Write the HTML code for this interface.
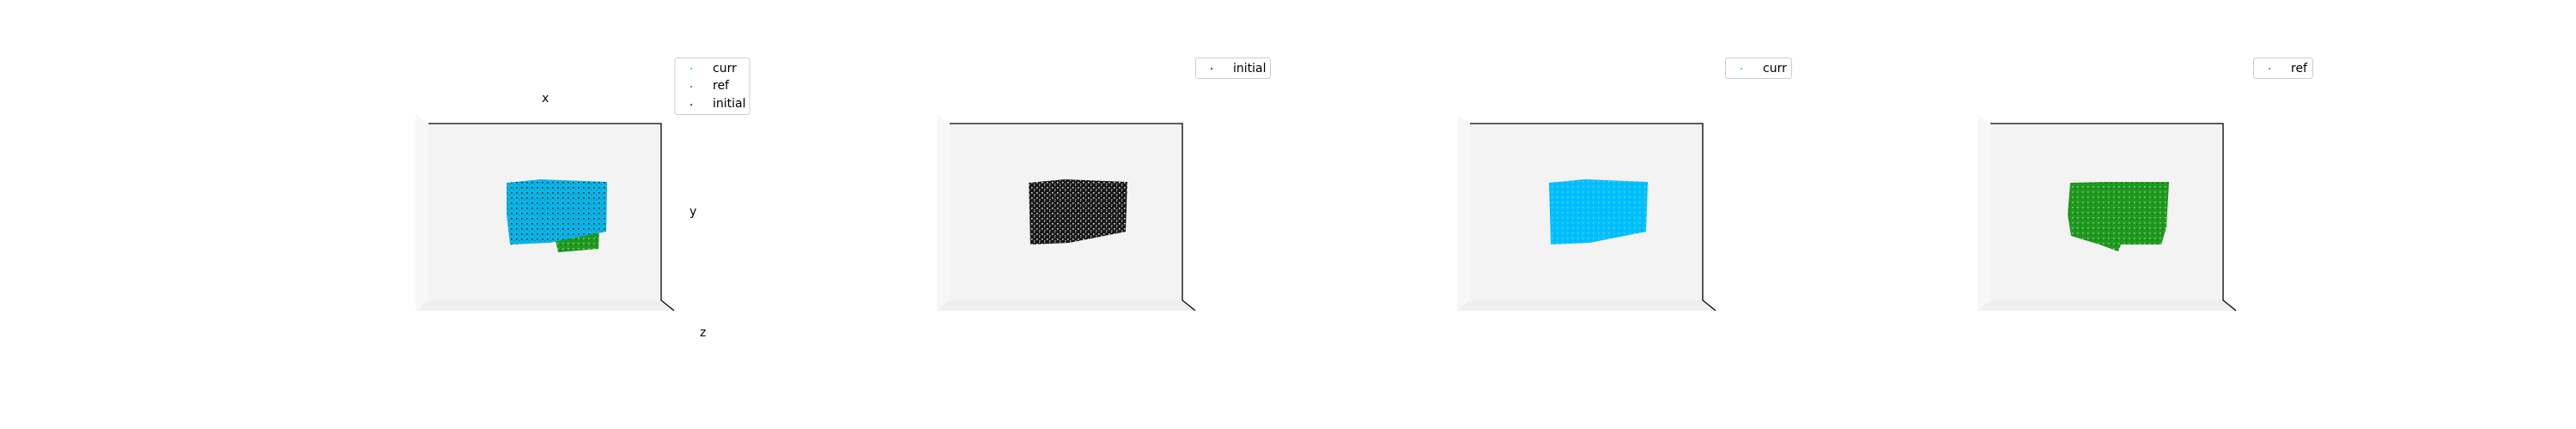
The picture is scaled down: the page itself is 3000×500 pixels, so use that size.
<!DOCTYPE html>
<html><head><meta charset="utf-8"><style>
html,body{margin:0;padding:0;background:#fff;width:3000px;height:500px;overflow:hidden}
svg{display:block}
text{font-family:"DejaVu Sans","Liberation Sans",sans-serif;font-size:14px;fill:#000}
</style></head><body>
<svg width="3000" height="500" viewBox="0 0 3000 500" xmlns="http://www.w3.org/2000/svg">
<defs>
<pattern id="pb" width="6" height="6" patternUnits="userSpaceOnUse">
<rect width="6" height="6" fill="#1a1a1a"/><rect x="1" y="2" width="1.5" height="1.5" fill="#eee"/><rect x="4" y="4" width="1.5" height="1.5" fill="#999"/><rect x="4" y="0" width="1" height="1" fill="#ccc"/>
</pattern>
<pattern id="pc" width="6" height="6" patternUnits="userSpaceOnUse">
<rect width="6" height="6" fill="#00bfff"/><rect x="1" y="1" width="1.5" height="1.5" fill="#5fd4ff"/><rect x="4" y="4" width="1" height="1" fill="#0aa0d8"/>
</pattern>
<pattern id="pm" width="6" height="6" patternUnits="userSpaceOnUse">
<rect width="6" height="6" fill="#0bb3ea"/><rect x="1" y="2" width="1.5" height="1.5" fill="#0a2230"/><rect x="4" y="4" width="1.2" height="1.2" fill="#2a8a2a"/>
</pattern>
<pattern id="pg" width="6" height="6" patternUnits="userSpaceOnUse">
<rect width="6" height="6" fill="#1f9a1f"/><rect x="1" y="1" width="1.5" height="1.5" fill="#8cc98c"/><rect x="4" y="3" width="1.2" height="1.2" fill="#0a6e0a"/>
</pattern>
<g id="ax">
<polygon points="484,133 499,144 499,350 484,362" fill="#f7f7f7"/>
<polygon points="484,362 499,350 770,350 785,362" fill="#efefef"/>
<rect x="499" y="144" width="271" height="206" fill="#f3f3f3"/>
<polyline points="499,144 770,144 770,350 785,362" fill="none" stroke="#000" stroke-width="1.3"/>
</g>
</defs>

<use href="#ax"/>
<polygon points="645,272 698,268 697,290 650,294" fill="url(#pg)"/>
<polygon points="590,213 630,209 707,212 706,270 640,283 594,285 590,250" fill="url(#pm)"/>
<text x="631" y="119">x</text>
<text x="803" y="251">y</text>
<text x="815" y="392">z</text>
<rect x="786" y="67.5" width="87" height="66" rx="3" fill="#fff" stroke="#ccc"/>
<circle cx="805" cy="80" r="1" fill="#00bfff"/><circle cx="805" cy="101" r="1" fill="#1f9a1f"/><circle cx="805" cy="122" r="1" fill="#222"/>
<text x="830" y="84">curr</text><text x="830" y="104">ref</text><text x="830" y="125">initial</text>

<use href="#ax" transform="translate(607,0)"/>
<polygon points="1198,213 1240,209 1313,212 1311,270 1245,283 1200,285" fill="url(#pb)"/>
<rect x="1392.5" y="67.5" width="87" height="24" rx="3" fill="#fff" stroke="#ccc"/>
<circle cx="1411" cy="80" r="1" fill="#222"/>
<text x="1436" y="84">initial</text>

<use href="#ax" transform="translate(1213,0)"/>
<polygon points="1804,213 1846,209 1919,212 1917,270 1851,283 1806,285" fill="url(#pc)"/>
<rect x="2009.5" y="67.5" width="77" height="24" rx="3" fill="#fff" stroke="#ccc"/>
<circle cx="2028" cy="80" r="1" fill="#00bfff"/>
<text x="2053" y="84">curr</text>

<use href="#ax" transform="translate(1819,0)"/>
<polygon points="2411,213 2450,212 2526,212 2523,265 2517,285 2470,285 2467,293 2445,285 2412,275 2408,250" fill="url(#pg)"/>
<rect x="2624.5" y="67.5" width="69" height="24" rx="3" fill="#fff" stroke="#ccc"/>
<circle cx="2643" cy="80" r="1" fill="#1f9a1f"/>
<text x="2668" y="84">ref</text>
</svg>
</body></html>
